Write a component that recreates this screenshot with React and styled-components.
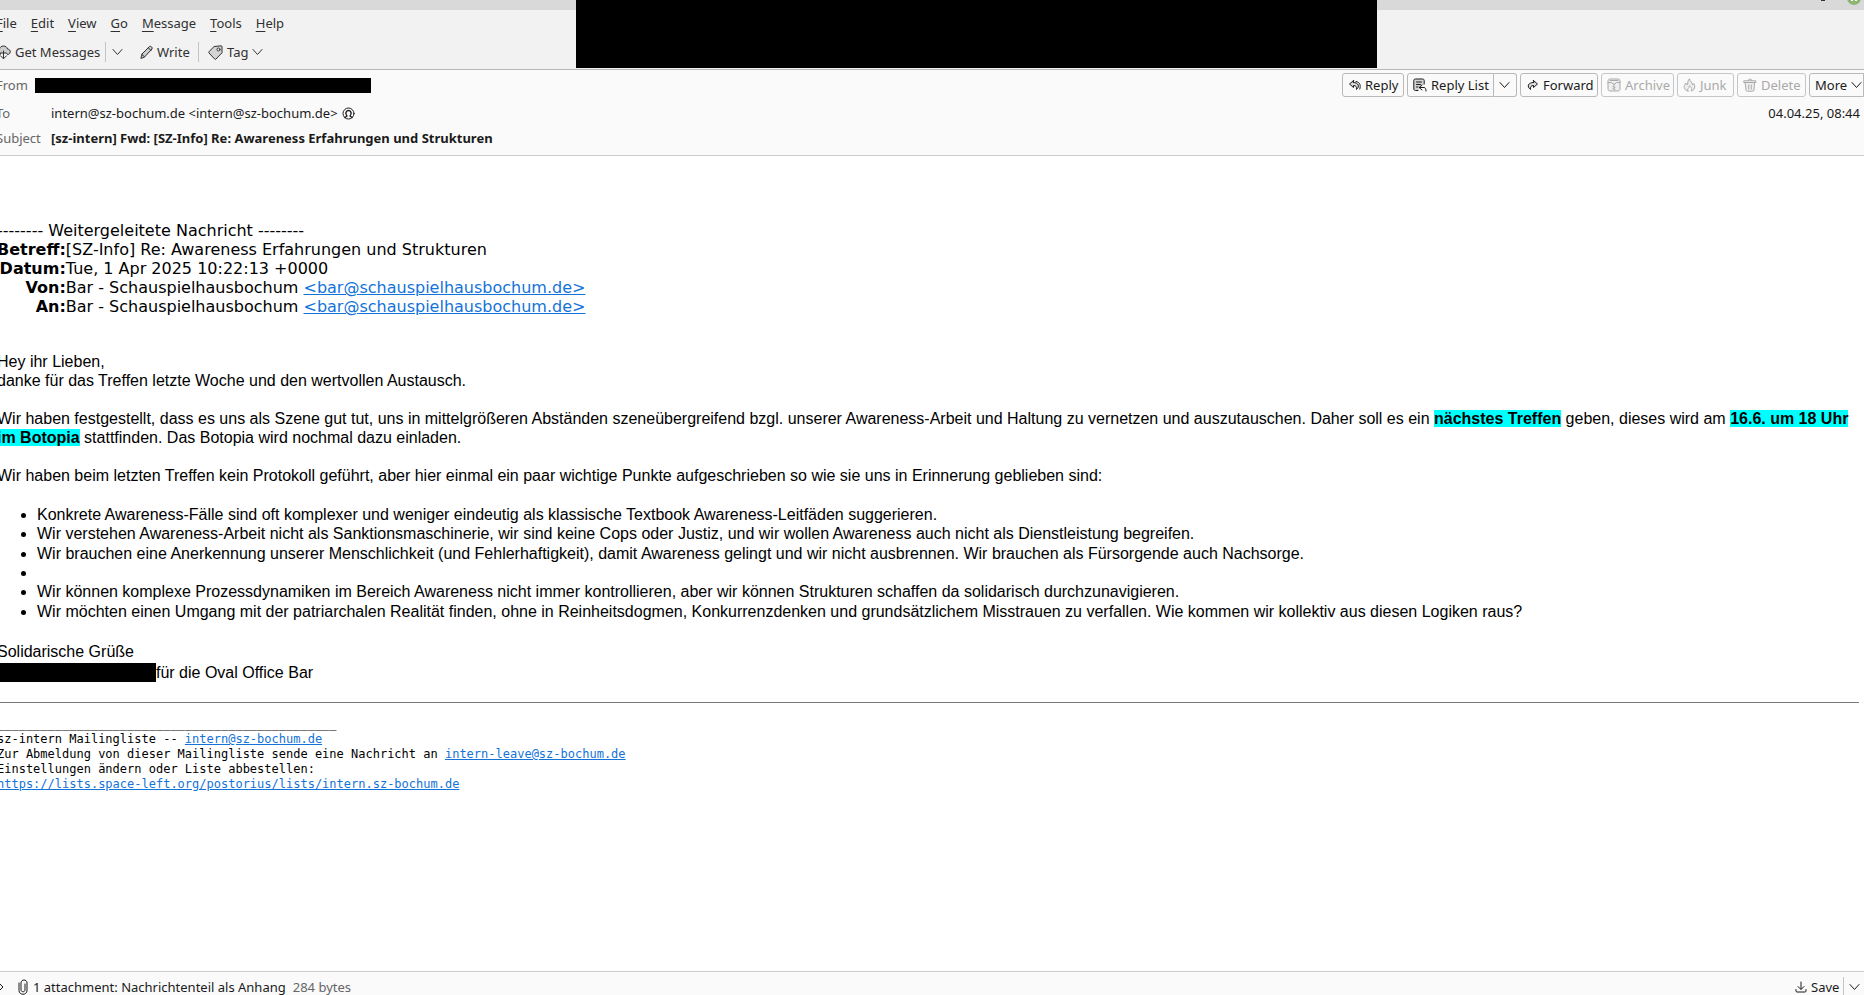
import React from 'react';
import styled, { createGlobalStyle } from 'styled-components';

const GlobalStyle = createGlobalStyle`
  * { box-sizing: border-box; }
  body {
    margin: 0;
    background: #fff;
    overflow: hidden;
  }
  button { font: inherit; color: inherit; }
`;

const Page = styled.div`
  position: relative;
  display: flex;
  flex-direction: column;
  height: 100vh;
  margin-left: -4px;
  font-family: 'Noto Sans', 'Open Sans', sans-serif;
  font-size: 13px;
  line-height: 18px;
  color: #1a1a1a;
`;

const TitleBar = styled.div`
  display: flex;
  justify-content: flex-end;
  height: 10px;
  background: #d9d9d9;
`;

const TopCover = styled.div`
  position: absolute;
  top: 0;
  left: 580px;
  width: 801px;
  height: 68px;
  background: #000;
`;

const Chrome = styled.div`
  background: #f2f2f2;
  border-bottom: 1px solid #b8b8b8;
  color: #303030;
`;

const MenuBar = styled.nav`
  display: flex;
  gap: 14px;
  height: 29px;
  padding-bottom: 3px;
  align-items: center;
`;

const MenuItem = styled.button`
  padding: 0;
  border: 0;
  background: none;
  white-space: nowrap;

  u { text-underline-offset: 3px; }
`;

const Toolbar = styled.div`
  display: flex;
  align-items: center;
  height: 30px;
  padding-bottom: 4px;
`;

const ToolButton = styled.button`
  display: flex;
  align-items: center;
  justify-content: ${(p) => (p.$center ? 'center' : 'flex-start')};
  gap: ${(p) => p.$gap || 4}px;
  min-width: ${(p) => p.$width || 0}px;
  height: 20px;
  margin-right: ${(p) => p.$after || 0}px;
  padding: 0;
  border: 0;
  background: none;
  white-space: nowrap;
`;

const Separator = styled.span`
  width: 1px;
  height: 20px;
  margin-right: ${(p) => p.$after || 0}px;
  background: #c4c4c4;
`;

const Header = styled.header`
  display: flex;
  justify-content: space-between;
  height: 86px;
  background: #fafafa;
  border-bottom: 1px solid #ccc;
`;

const Fields = styled.dl`
  display: grid;
  grid-template-columns: 48px auto;
  grid-template-rows: 30px 26px 24px;
  column-gap: 7px;
  align-items: center;
  margin: 0;
  white-space: nowrap;
`;

const Label = styled.dt`
  color: #666;
`;

const Value = styled.dd`
  display: flex;
  align-items: center;
  gap: 4px;
  margin: 0;
  font-weight: ${(p) => (p.$bold ? 700 : 400)};
`;

const SenderCover = styled.div`
  width: 336px;
  height: 15px;
  margin-left: -16px;
  background: #000;
`;

const Side = styled.div`
  display: flex;
  flex-direction: column;
  align-items: flex-end;
`;

const Actions = styled.div`
  display: flex;
  gap: 3px;
  padding-top: 3px;
`;

const Action = styled.button`
  display: flex;
  align-items: center;
  gap: 4px;
  width: ${(p) => p.$width}px;
  height: 24px;
  padding: 0 0 0 5px;
  border: 1px solid #b9b9b9;
  border-radius: ${(p) => p.$radius || '3px'};
  background: transparent;
  white-space: nowrap;

  &:disabled {
    color: #a9a9a9;
    border-color: #c6c6c6;
  }
`;

const Split = styled.div`
  display: flex;

  button + button { border-left: 0; }
`;

const DateText = styled.time`
  padding: 7px 4px 0 0;
`;

const Message = styled.main`
  flex: 1;
  min-height: 0;
  padding: 65px 5px 0 1px;
  overflow: hidden;
  background: #fff;
  color: #000;
  font-family: 'Liberation Sans', Arial, sans-serif;
  font-size: 16px;
  line-height: 19px;

  a { color: #1373d9; }
`;

const Forwarded = styled.div`
  margin-bottom: 36px;
  font-family: 'DejaVu Sans', sans-serif;

  table { border-collapse: collapse; }
  th, td { padding: 0; text-align: left; white-space: nowrap; }
  th { text-align: right; }
`;

const Paragraph = styled.p`
  margin: 0 0 19px;
`;

const Highlight = styled.b`
  background: #0ff;
`;

const Points = styled.ul`
  margin: 20px 0 21px;
  padding-left: 40px;

  li { min-height: 19px; }
  li:nth-child(3n + 2) { min-height: 20px; }
`;

const SignOff = styled.div`
  display: flex;
  align-items: center;
  margin-top: 2px;
`;

const NameCover = styled.span`
  width: 159px;
  height: 19px;
  background: #000;
`;

const Rule = styled.hr`
  height: 1px;
  margin: 20px 0 14px;
  border: 0;
  background: #777;
`;

const Footer = styled.pre`
  margin: 0;
  font-family: 'DejaVu Sans Mono', monospace;
  font-size: 12px;
  line-height: 15px;
`;

const AttachmentBar = styled.footer`
  display: flex;
  align-items: center;
  height: 24px;
  padding-top: 7px;
  background: #fafafa;
  border-top: 1px solid #ccc;
  white-space: nowrap;
`;

const AttachmentName = styled.span`
  margin: 0 7px 0 5px;
`;

const Size = styled.span`
  flex: 1;
  color: #666;
`;

const Svg = ({ w = 14, h = 14, box, children }) => (
  <svg
    width={w}
    height={h}
    viewBox={box || `0 0 ${w} ${h}`}
    fill="none"
    stroke="currentColor"
    strokeWidth="1"
    strokeLinecap="round"
    strokeLinejoin="round"
    aria-hidden="true"
  >
    {children}
  </svg>
);

const Chevron = () => (
  <Svg w={11} h={8}>
    <path d="M1 1.5l4.5 5 4.5-5" />
  </Svg>
);

const CloudIcon = () => (
  <Svg w={15} h={15}>
    <path d="M4 9.5C1.5 9.500.8 8 .8 6.700.8 5 2 4 3.400 4 4 2 5.500 1 7.500 1s3.500 1 4 3c1.700.2 2.800 1.300 2.800 2.800S13 9.500 11.500 9.500l-1-1.500h-6z" fill="#ccc" />
    <path d="M7.500 6v7.500M4.500 10.800l3 3 3-3" />
  </Svg>
);

const PencilIcon = () => (
  <Svg w={13} h={14}>
    <path d="M1 13l1-4 7.500-7.500c1-1 3.500 1 2.500 2.500L4.500 12z" fill="#ccc" />
    <path d="M2 9.500l2.500 2.300M8.500 3l2.500 2.500" />
  </Svg>
);

const TagIcon = () => (
  <Svg w={15} h={15}>
    <path d="M6.500 1.500l6.500-.7c.7 0 1 .4 1 1v6L8 14c-.6.5-1 .4-1.500-.1L1 8c-.4-.5-.4-1 0-1.400z" fill="#d4d4d4" />
    <circle cx="10.500" cy="4.500" r="1.500" fill="#f2f2f2" />
  </Svg>
);

const ReplyIcon = () => (
  <Svg w={13} h={12}>
    <path d="M5.500 1.500L1.500 5l4 3.500V6.500c2.500 0 3.500 1.500 3 4 3.500-3 2-7-3-7z" fill="#ddd" />
    <path d="M8 2.500c4 .5 5 4 3.800 7.500" />
  </Svg>
);

const ForwardIcon = () => (
  <Svg w={13} h={12}>
    <path d="M7.500 1.500l4 3.500-4 3.500V6.500C5 6.500 4 8 4.500 10.500c-4-3-2.500-7 3-7z" fill="#ddd" />
  </Svg>
);

const ReplyListIcon = () => (
  <Svg w={14} h={14}>
    <path d="M5 12.500H2.500c-1 0-1.700-.6-1.700-1.500V2.500C.8 1.500 1.500 1 2.500 1h7c1 0 1.700.5 1.700 1.500V6" fill="#d4d4d4" />
    <path d="M3.500 4h5M3.500 6.500h4M3.500 9h1.500M9 7l-2.800 2.500L9 12M6.500 9.500H11c1.500 0 2 1.500 2 3.500" />
  </Svg>
);

const ArchiveIcon = () => (
  <Svg w={14} h={14}>
    <path d="M1 3c0-1.200.8-2 2-2h8c1.200 0 2 .8 2 2v8c0 1.200-.8 2-2 2H3c-1.200 0-2-.8-2-2z" fill="#eee" />
    <path d="M1 4.500h3.500L6 6h2l1.500-1.500H13M3 2.500h8M7 6.500v1M6 8.500h1M7 9.500h1M6 10.500h1M7 11.500h1" />
  </Svg>
);

const FlameIcon = () => (
  <Svg w={13} h={14}>
    <path d="M5 13c-3-.5-4.500-3-3.500-5.500.3-.8 1-1.500 1.300-2.500l1.700 2C5 5 4.500 2.500 6.500.800c0 2.500 3 3.500 3 6.200l1.300-1.500c2 3 .7 7-2.800 7.500 1.500-2 .5-3.500-1.500-5.200C6.500 10 3.500 10.500 5 13z" fill="#eee" />
  </Svg>
);

const TrashIcon = () => (
  <Svg w={14} h={14}>
    <path d="M2.500 4.500h9l-.5 7.500c0 .7-.5 1.200-1.200 1.200H4.200c-.7 0-1.200-.5-1.200-1.200z" fill="#eee" />
    <path d="M1.200 2.800h11.600v1.700H1.200zM5 2.500c0-2 4-2 4 0M5.700 7v4M8.300 7v4" />
  </Svg>
);

const ContactIcon = () => (
  <Svg w={13} h={13}>
    <circle cx="6.500" cy="6.500" r="5.500" />
    <path d="M3 10.500l2-1.500c-2-2-1.300-5.500 1.500-5.500S10 7 8 9l2 1.500" strokeWidth="1.400" />
  </Svg>
);

const ClipIcon = () => (
  <Svg w={10} h={16}>
    <path d="M1 4v7.500c0 5 8 5 8 0V4c0-4-6-4-6 0v7c0 2.300 4 2.300 4 0V5" />
  </Svg>
);

const SaveIcon = () => (
  <Svg w={12} h={12}>
    <path d="M6 1v7M3 5.500l3 3 3-3M1 8.500V10c0 .7.400 1 1 1h8c.6 0 1-.3 1-1V8.500" />
  </Svg>
);

const menu = ['File', 'Edit', 'View', 'Go', 'Message', 'Tools', 'Help'];

const barAddress = <a href="mailto:bar@schauspielhausbochum.de">&lt;bar@schauspielhausbochum.de&gt;</a>;

const App = () => {
  return (
    <>
      <GlobalStyle />
      <Page>
        <TitleBar>
          <svg width="48" height="10" viewBox="0 0 48 10" aria-hidden="true">
            <rect x="5" width="4" height="1" fill="#333" />
            <circle cx="38" cy="-2" r="7" fill="#8fb574" />
            <path d="M35 0h2v1h-2zM39 0h2v1h-2z" fill="#fff" />
          </svg>
        </TitleBar>

        <Chrome>
          <MenuBar>
            {menu.map((name) => (
              <MenuItem key={name} type="button"><u>{name[0]}</u>{name.slice(1)}</MenuItem>
            ))}
          </MenuBar>
          <Toolbar>
            <ToolButton type="button" $width={109}><CloudIcon /> Get Messages</ToolButton>
            <Separator />
            <ToolButton type="button" $width={22} $after={12} $center aria-label="Get Messages options"><Chevron /></ToolButton>
            <ToolButton type="button" $width={58}><PencilIcon /> Write</ToolButton>
            <Separator $after={9} />
            <ToolButton type="button"><TagIcon /> Tag <Chevron /></ToolButton>
          </Toolbar>
        </Chrome>
        <TopCover />

        <Header>
          <Fields>
            <Label>From</Label>
            <Value><SenderCover /></Value>
            <Label>To</Label>
            <Value>intern@sz-bochum.de &lt;intern@sz-bochum.de&gt; <ContactIcon /></Value>
            <Label>Subject</Label>
            <Value $bold>[sz-intern] Fwd: [SZ-Info] Re: Awareness Erfahrungen und Strukturen</Value>
          </Fields>
          <Side>
            <Actions>
              <Action type="button" $width={62}><ReplyIcon /> Reply</Action>
              <Split>
                <Action type="button" $width={87} $radius="3px 0 0 3px"><ReplyListIcon /> Reply List</Action>
                <Action type="button" $width={23} $radius="0 3px 3px 0" aria-label="Reply options"><Chevron /></Action>
              </Split>
              <Action type="button" $width={78}><ForwardIcon /> Forward</Action>
              <Action type="button" $width={73} disabled><ArchiveIcon /> Archive</Action>
              <Action type="button" $width={57} disabled><FlameIcon /> Junk</Action>
              <Action type="button" $width={69} disabled><TrashIcon /> Delete</Action>
              <Action type="button" $width={55} $radius="3px 0 0 3px">More <Chevron /></Action>
            </Actions>
            <DateText>04.04.25, 08:44</DateText>
          </Side>
        </Header>

        <Message>
          <Forwarded>
            -------- Weitergeleitete Nachricht --------
            <table>
              <tbody>
                <tr><th>Betreff:</th><td>[SZ-Info] Re: Awareness Erfahrungen und Strukturen</td></tr>
                <tr><th>Datum:</th><td>Tue, 1 Apr 2025 10:22:13 +0000</td></tr>
                <tr><th>Von:</th><td>Bar - Schauspielhausbochum {barAddress}</td></tr>
                <tr><th>An:</th><td>Bar - Schauspielhausbochum {barAddress}</td></tr>
              </tbody>
            </table>
          </Forwarded>

          <Paragraph>
            Hey ihr Lieben,<br />
            danke für das Treffen letzte Woche und den wertvollen Austausch.
          </Paragraph>
          <Paragraph>
            Wir haben festgestellt, dass es uns als Szene gut tut, uns in mittelgrößeren Abständen szeneübergreifend
            bzgl. unserer Awareness-Arbeit und Haltung zu vernetzen und auszutauschen. Daher soll es
            ein <Highlight>nächstes Treffen</Highlight> geben, dieses wird am <Highlight>16.6. um 18 Uhr im
            Botopia</Highlight> stattfinden. Das Botopia wird nochmal dazu einladen.
          </Paragraph>
          <Paragraph>
            Wir haben beim letzten Treffen kein Protokoll geführt, aber hier einmal ein paar wichtige Punkte
            aufgeschrieben so wie sie uns in Erinnerung geblieben sind:
          </Paragraph>

          <Points>
            <li>Konkrete Awareness-Fälle sind oft komplexer und weniger eindeutig als klassische Textbook Awareness-Leitfäden suggerieren.</li>
            <li>Wir verstehen Awareness-Arbeit nicht als Sanktionsmaschinerie, wir sind keine Cops oder Justiz, und wir wollen Awareness auch nicht als Dienstleistung begreifen.</li>
            <li>Wir brauchen eine Anerkennung unserer Menschlichkeit (und Fehlerhaftigkeit), damit Awareness gelingt und wir nicht ausbrennen. Wir brauchen als Fürsorgende auch Nachsorge.</li>
            <li></li>
            <li>Wir können komplexe Prozessdynamiken im Bereich Awareness nicht immer kontrollieren, aber wir können Strukturen schaffen da solidarisch durchzunavigieren.</li>
            <li>Wir möchten einen Umgang mit der patriarchalen Realität finden, ohne in Reinheitsdogmen, Konkurrenzdenken und grundsätzlichem Misstrauen zu verfallen. Wie kommen wir kollektiv aus diesen Logiken raus?</li>
          </Points>

          <div>Solidarische Grüße</div>
          <SignOff><NameCover />für die Oval Office Bar</SignOff>
          <Rule />

          <Footer>
            _______________________________________________{'\n'}
            sz-intern Mailingliste -- <a href="mailto:intern@sz-bochum.de">intern@sz-bochum.de</a>{'\n'}
            Zur Abmeldung von dieser Mailingliste sende eine Nachricht an <a href="mailto:intern-leave@sz-bochum.de">intern-leave@sz-bochum.de</a>{'\n'}
            Einstellungen ändern oder Liste abbestellen:{'\n'}
            <a href="https://lists.space-left.org/postorius/lists/intern.sz-bochum.de">https://lists.space-left.org/postorius/lists/intern.sz-bochum.de</a>
          </Footer>
        </Message>

        <AttachmentBar>
          <ToolButton type="button" $width={22} aria-label="Show attachments">
            <Svg w={8} h={10}><path d="M3 1l4 4-4 4" /></Svg>
          </ToolButton>
          <ClipIcon />
          <AttachmentName>1 attachment: Nachrichtenteil als Anhang</AttachmentName>
          <Size>284 bytes</Size>
          <ToolButton type="button" $width={48}><SaveIcon /> Save</ToolButton>
          <Separator />
          <ToolButton type="button" $width={20} $center aria-label="Save options"><Chevron /></ToolButton>
        </AttachmentBar>
      </Page>
    </>
  );
};

export default App;
